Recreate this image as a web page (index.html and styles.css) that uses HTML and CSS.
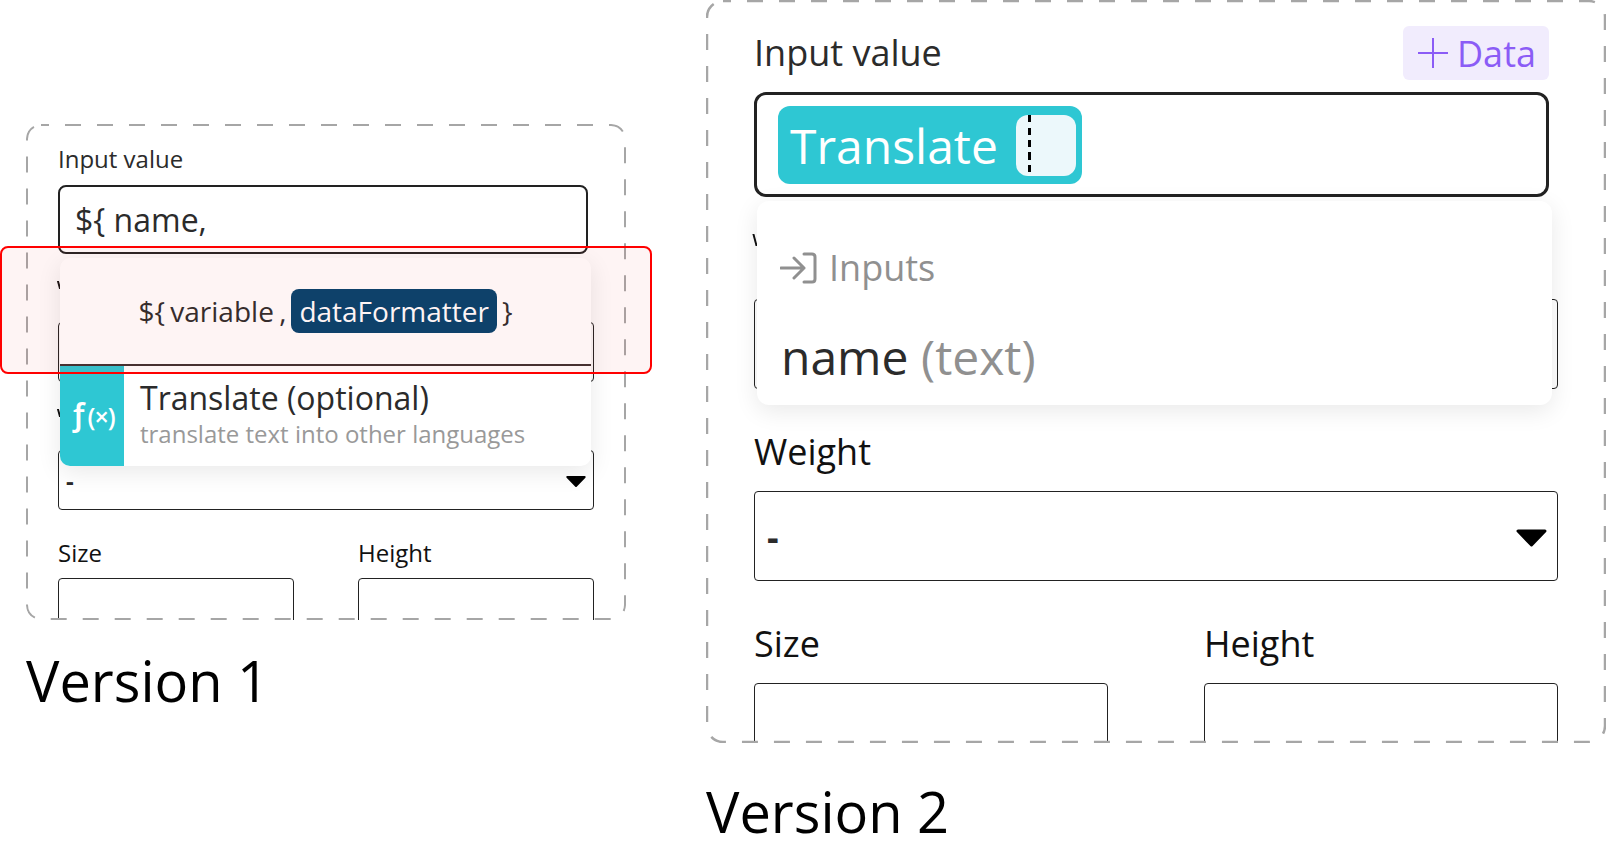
FILE: index.html
```html
<!DOCTYPE html>
<html lang="en">
<head>
  <meta charset="UTF-8" />
  <title>Input value versions</title>
  <link rel="stylesheet" href="styles.css">
</head>
<body>

  <main class="compare">

    <section class="version version-one">
      <div class="frame">
        <svg class="frame-line" width="600" height="496"><rect x="1" y="1" width="598" height="494" rx="14" /></svg>
        <div class="field-label label-dark">Input value</div>
        <div class="value-box">${ name,</div>
        <div class="field-label label-gap label-stub"></div>
        <div class="plain-box"></div>
        <div class="field-label label-gap label-stub"></div>
        <div class="plain-box select-box">
          <span>-</span>
          <svg class="caret" viewBox="0 0 31 18"><path d="M2 2H29L15.5 16Z" /></svg>
        </div>
        <div class="size-row">
          <div>
            <div class="field-label">Size</div>
            <div class="plain-box"></div>
          </div>
          <div>
            <div class="field-label">Height</div>
            <div class="plain-box"></div>
          </div>
        </div>

        <div class="menu">
          <div class="syntax-row">
            <span class="syntax-text">${ variable ,</span>
            <span class="syntax-tag">dataFormatter</span>
            <span class="syntax-text">}</span>
          </div>
          <div class="fn-row">
            <div class="fn-icon"><span class="fn-f">ƒ</span><span class="fn-x">(×)</span></div>
            <div class="fn-text">
              <div class="fn-name">Translate (optional)</div>
              <div class="fn-desc">translate text into other languages</div>
            </div>
          </div>
        </div>
      </div>
      <div class="highlight"></div>
      <h2 class="version-title">Version 1</h2>
    </section>

    <section class="version version-two">
      <div class="frame">
        <svg class="frame-line" width="900" height="743"><rect x="1" y="1" width="898" height="741" rx="16" /></svg>
        <div class="head-row">
          <div class="field-label label-dark">Input value</div>
          <div class="data-btn">
            <svg width="30" height="30" viewBox="0 0 30 30"><path d="M15 0V30M0 15H30" /></svg>
            <span>Data</span>
          </div>
        </div>
        <div class="value-box">
          <div class="chip">
            <span>Translate</span>
            <div class="chip-slot"><i class="cursor"></i></div>
          </div>
        </div>
        <div class="field-label label-gap label-stub"></div>
        <div class="plain-box"></div>
        <div class="field-label label-gap">Weight</div>
        <div class="plain-box select-box">
          <span>-</span>
          <svg class="caret" viewBox="0 0 31 18"><path d="M2 2H29L15.5 16Z" /></svg>
        </div>
        <div class="size-row">
          <div>
            <div class="field-label">Size</div>
            <div class="plain-box"></div>
          </div>
          <div>
            <div class="field-label">Height</div>
            <div class="plain-box"></div>
          </div>
        </div>

        <div class="menu">
          <div class="menu-head">
            <svg width="37" height="32" viewBox="0 0 37 32"><path d="M1 16H24M14 6L24 16L14 26M24 2H32Q35 2 35 5V27Q35 30 32 30H24" /></svg>
            <span>Inputs</span>
          </div>
          <div class="menu-item">name <span>(text)</span></div>
        </div>
      </div>
      <h2 class="version-title">Version 2</h2>
    </section>

  </main>

</body>
</html>
```

FILE: styles.css
```css
* {
  margin: 0;
  padding: 0;
  box-sizing: border-box;
}

body {
  font-family: 'Open Sans', sans-serif;
  background: #fff;
  color: #2b2b2b;
  overflow: hidden;
}

.compare {
  display: flex;
  width: 1606px;
  height: 848px;
}

.version {
  position: relative;
  flex: none;
}

.version-one {
  width: 706px;
  padding: 124px 0 0 26px;
}

.version-two {
  width: 900px;
}

/* dashed outline, drawn as svg so the dash length can be set */
.frame {
  position: relative;
  overflow: hidden;
  border-radius: 14px;
}

.frame-line {
  position: absolute;
  top: 0;
  left: 0;
  z-index: 3;
  pointer-events: none;
}

.frame-line rect {
  fill: none;
  stroke: #a6a6a6;
  stroke-width: 2;
  stroke-dasharray: 16 16;
  stroke-dashoffset: 8;
}

.version-two .frame-line rect {
  stroke-width: 2.5;
}

.version-one .frame {
  width: 600px;
  height: 496px;
  padding: 19px 32px 0;
}

.version-two .frame {
  width: 900px;
  height: 743px;
  padding: 26px 48px 0;
}

.field-label {
  color: #111;
}

.version-one .field-label {
  height: 32px;
  margin-bottom: 9px;
  font-size: 24px;
  line-height: 32px;
}

.version-two .field-label {
  height: 52px;
  margin-bottom: 13px;
  font-size: 36px;
  line-height: 52px;
}

.version-one .label-dark {
  margin-bottom: 10px;
}

.version-one .label-gap {
  margin-top: 27px;
}

.version-two .label-gap {
  margin-top: 37px;
}

.field-label.label-dark {
  color: #2b2b2b;
}

.version-two .head-row .field-label {
  margin-bottom: 0;
}

/* only the corner of this label shows beside the open menu */
.label-stub::before {
  content: "";
  display: block;
  width: 2px;
  background: #111;
  transform: skewX(15deg);
}

.version-one .label-stub::before {
  height: 8px;
  margin: 9px 0 0 0;
}

.version-two .label-stub::before {
  height: 12px;
  margin: 13px 0 0 0;
}

.value-box {
  border: 2px solid #222;
  border-radius: 8px;
  background: #fff;
}

.version-one .value-box {
  width: 530px;
  height: 69px;
  padding: 0 15px;
  font-size: 32px;
  line-height: 65px;
}

.version-two .value-box {
  width: 795px;
  height: 105px;
  margin-top: 12px;
  padding: 11px 21px;
  border-width: 3px;
  border-radius: 12px;
}

.plain-box {
  border: 1px solid #222;
  border-radius: 4px;
  background: #fff;
}

.version-one .plain-box {
  width: 536px;
  height: 60px;
}

.version-one .size-row .plain-box {
  width: 236px;
}

.version-two .plain-box {
  width: 804px;
  height: 90px;
}

.version-two .size-row .plain-box {
  width: 354px;
}

.select-box {
  display: flex;
  align-items: center;
  justify-content: space-between;
  font-weight: 700;
}

.version-one .select-box {
  padding: 0 7px;
  font-size: 24px;
}

.version-two .select-box {
  padding: 0 10px 0 12px;
  font-size: 36px;
}

.caret {
  margin-top: 3px;
}

.caret path {
  fill: #000;
  stroke: #000;
  stroke-width: 3;
  stroke-linejoin: round;
}

.version-one .caret {
  width: 20px;
  height: 13px;
}

.version-two .caret {
  width: 31px;
  height: 18px;
}

.size-row {
  display: flex;
}

.version-one .size-row {
  gap: 64px;
  margin-top: 27px;
}

.version-two .size-row {
  gap: 96px;
  margin-top: 37px;
}

.head-row {
  display: flex;
  align-items: center;
  justify-content: space-between;
  width: 795px;
}

.data-btn {
  display: flex;
  align-items: center;
  gap: 9px;
  width: 146px;
  height: 54px;
  padding-left: 15px;
  border-radius: 6px;
  background: #f1ecfd;
  color: #8b5cf6;
  font-size: 36px;
}

.data-btn path {
  fill: none;
  stroke: #8b5cf6;
  stroke-width: 2;
}

.chip {
  display: inline-flex;
  align-items: center;
  gap: 18px;
  height: 78px;
  padding: 0 6px 0 12px;
  border-radius: 12px;
  background: #2ec7d3;
  color: #fff;
  font-size: 48px;
}

.chip-slot {
  position: relative;
  width: 60px;
  height: 61px;
  border-radius: 12px;
  background: #ecf8fb;
}

.cursor {
  position: absolute;
  top: 0;
  bottom: 0;
  left: 12px;
  width: 3px;
  background: repeating-linear-gradient(#000 0 7px, transparent 7px 12.5px);
}

.menu {
  position: absolute;
  z-index: 2;
  overflow: hidden;
  background: #fff;
  box-shadow: 0 6px 24px rgba(0, 0, 0, 0.09);
}

.version-one .menu {
  top: 134px;
  left: 34px;
  width: 531px;
  height: 208px;
  border-radius: 10px;
}

.version-two .menu {
  top: 201px;
  left: 51px;
  width: 795px;
  height: 204px;
  border-radius: 12px;
}

.syntax-row {
  display: flex;
  align-items: center;
  justify-content: center;
  gap: 5px;
  height: 108px;
  border-bottom: 2px solid #3d2f2f;
  font-size: 28px;
}

.syntax-text {
  word-spacing: -2px;
}

.syntax-tag {
  padding: 0 8px;
  border-radius: 8px;
  background: #00416d;
  color: #fff;
  line-height: 44px;
}

.fn-row {
  display: flex;
  height: 100px;
}

.fn-icon {
  display: flex;
  align-items: center;
  justify-content: center;
  flex: none;
  width: 64px;
  background: #2ec7d3;
  color: #fff;
}

.fn-f {
  margin-bottom: 8px;
  font-size: 32px;
  font-weight: 600;
}

.fn-x {
  font-size: 25px;
  font-weight: 600;
  letter-spacing: -1px;
}

.fn-text {
  padding: 10px 0 0 16px;
}

.fn-name {
  font-size: 32px;
  line-height: 44px;
}

.fn-desc {
  font-size: 24px;
  line-height: 28px;
  color: #999;
}

.menu-head {
  display: flex;
  align-items: center;
  gap: 12px;
  padding: 42px 23px 0;
  color: #909090;
  font-size: 36px;
}

.menu-head path {
  fill: none;
  stroke: #909090;
  stroke-width: 3;
  stroke-linecap: round;
  stroke-linejoin: round;
}

.menu-item {
  padding: 33px 24px 0;
  font-size: 48px;
  line-height: 64px;
}

.menu-item span {
  color: #909090;
}

.highlight {
  position: absolute;
  z-index: 4;
  top: 246px;
  left: 0;
  width: 652px;
  height: 128px;
  border: 2px solid #f00;
  border-radius: 8px;
  background: rgba(235, 70, 60, 0.06);
}

.version-title {
  font-weight: 400;
  color: #000;
}

.version-one .version-title {
  margin-top: 22px;
  font-size: 56px;
  line-height: 76px;
}

.version-two .version-title {
  margin-top: 30px;
  font-size: 56px;
  line-height: 76px;
}
```
